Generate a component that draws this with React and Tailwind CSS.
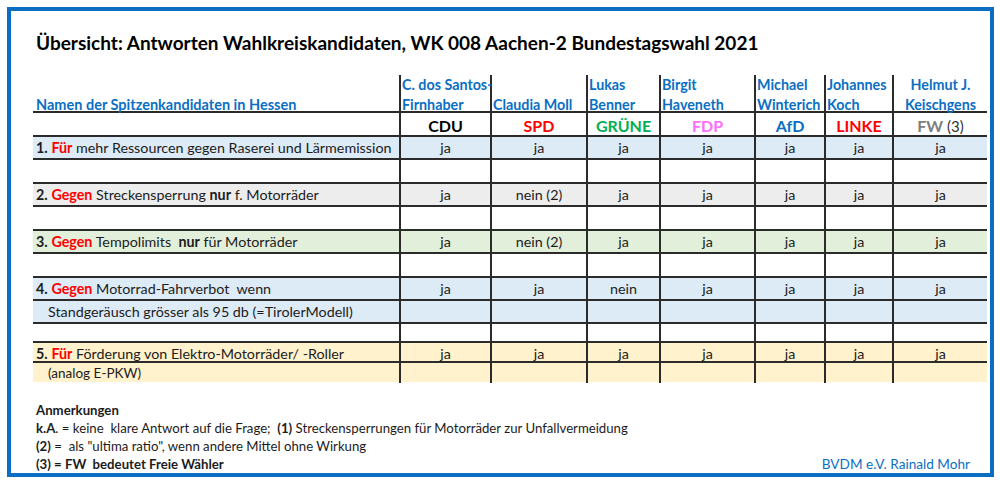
const FONT = { fontFamily: 'Lato, "Open Sans", sans-serif' };

const RED = 'text-[#ff0000]';
const COLS = 'grid grid-cols-[366px_91px_96px_73px_95px_70px_68px_95px]';

const candidates = [
  { a: 'C. dos Santos-', b: 'Firnhaber' },
  { a: '', b: 'Claudia Moll' },
  { a: 'Lukas', b: 'Benner' },
  { a: 'Birgit', b: 'Haveneth' },
  { a: 'Michael', b: 'Winterich' },
  { a: 'Johannes', b: 'Koch' },
  { a: 'Helmut J.', b: 'Keischgens', center: true },
];

const questions = [
  {
    bg: 'bg-[#ddebf7]',
    label: <><b>1.</b> <b className={RED}>Für</b> mehr Ressourcen gegen Raserei und Lärmemission</>,
    answers: ['ja', 'ja', 'ja', 'ja', 'ja', 'ja', 'ja'],
  },
  {
    bg: 'bg-[#ededed]',
    label: <><b>2.</b> <b className={RED}>Gegen</b> Streckensperrung <b>nur</b> f. Motorräder</>,
    answers: ['ja', 'nein (2)', 'ja', 'ja', 'ja', 'ja', 'ja'],
  },
  {
    bg: 'bg-[#e2efda]',
    label: <><b>3.</b> <b className={RED}>Gegen</b> Tempolimits  <b>nur</b> für Motorräder</>,
    answers: ['ja', 'nein (2)', 'ja', 'ja', 'ja', 'ja', 'ja'],
  },
  {
    bg: 'bg-[#ddebf7]',
    label: <><b>4.</b> <b className={RED}>Gegen</b> Motorrad-Fahrverbot  wenn</>,
    answers: ['ja', 'ja', 'nein', 'ja', 'ja', 'ja', 'ja'],
    extra: 'Standgeräusch grösser als 95 db (=TirolerModell)',
    spacer: 'h-[19px]',
  },
  {
    bg: 'bg-[#fff2cc]',
    label: <><b>5.</b> <b className={RED}>Für</b> Förderung von Elektro-Motorräder/ -Roller</>,
    answers: ['ja', 'ja', 'ja', 'ja', 'ja', 'ja', 'ja'],
    extra: '(analog E-PKW)',
    small: true,
    last: true,
  },
];

function Row({ height, bg = '', border = true, label, cells = [], cellClass = '', labelClass = '' }) {
  return (
    <div className={`${COLS} ${height} ${bg} ${border ? 'border-b-2 border-[#2b2b2b]' : ''}`}>
      <div className={`flex items-center pl-[3px] ${labelClass}`}>
        <span className="whitespace-pre">{label}</span>
      </div>
      {Array.from({ length: 7 }).map((_, i) => (
        <div key={i} className={`flex items-center justify-center border-l-2 border-[#2b2b2b] ${cellClass}`}>
          {cells[i]}
        </div>
      ))}
    </div>
  );
}

export default function App() {
  return (
    <div className="w-[1000px] h-[482px] bg-white pt-[7px] pl-[7px] text-[#1c1c1c]" style={FONT}>
      <div className="w-[987px] h-[470px] border-4 border-[#0a6fc3] pl-[22px] pr-[3px]">
        <h1 className="mt-[19px] text-[19px] leading-[26px] font-bold text-black pl-[3px]">
          Übersicht: Antworten Wahlkreiskandidaten, WK 008 Aachen-2 Bundestagswahl 2021
        </h1>

        <div className="mt-[19px] w-[954px] text-[14.3px]">
          {/* candidate names */}
          <div className={`${COLS} h-[38px] border-b-2 border-[#2b2b2b] font-bold text-[#0a6fc3] leading-[20px]`}>
            <div className="flex items-end pl-[3px] pb-[5px] text-[14.5px]">Namen der Spitzenkandidaten in Hessen</div>
            {candidates.map((c, i) => (
              <div
                key={i}
                className={`flex flex-col justify-end border-l-2 border-[#2b2b2b] pb-[5px] whitespace-nowrap ${c.center ? 'items-center' : 'pl-[1px]'}`}
              >
                <div className="h-[20px] relative z-10">{c.a}</div>
                <div>{c.b}</div>
              </div>
            ))}
          </div>

          {/* parties */}
          <Row
            height="h-[24px]"
            cellClass="font-bold text-[16px] pt-[1px]"
            cells={[
              <span className="text-black">CDU</span>,
              <span className="text-[#ff0000]">SPD</span>,
              <span className="text-[#00b050]">GRÜNE</span>,
              <span className="text-[#ff6dff]">FDP</span>,
              <span className="text-[#0a6fc3]">AfD</span>,
              <span className="text-[#ff0000]">LINKE</span>,
              <span>
                <span className="text-[#7f7f7f]">FW</span>
                <span className="font-normal text-[15px] text-[#333]"> (3)</span>
              </span>,
            ]}
          />

          {questions.map((q, i) => (
            <div key={i}>
              <Row height={q.last ? 'h-[20px]' : 'h-[23px]'} bg={q.bg} label={q.label} cells={q.answers} />
              {q.extra && (
                <Row
                  height={q.last ? 'h-[19px]' : 'h-[23px]'}
                  bg={q.bg}
                  border={!q.last}
                  label={q.extra}
                  labelClass={`pl-[15px] ${q.small ? 'text-[13.5px]' : ''}`}
                />
              )}
              {!q.last && <Row height={q.spacer || 'h-[24px]'} />}
            </div>
          ))}
        </div>

        {/* notes */}
        <div className="mt-[19px] text-[13.2px] leading-[18px] pl-[3px]">
          <div className="font-bold">Anmerkungen</div>
          <div className="whitespace-pre">
            <b>k.A</b>. = keine  klare Antwort auf die Frage;  <b>(1)</b> Streckensperrungen für Motorräder zur Unfallvermeidung
          </div>
          <div className="whitespace-pre">
            <b>(2)</b> =  als "ultima ratio", wenn andere Mittel ohne Wirkung
          </div>
          <div className="flex justify-between pr-[17px]">
            <span className="font-bold whitespace-pre">(3) = FW  bedeutet Freie Wähler</span>
            <span className="text-[#0a6fc3] text-[13.6px]">BVDM e.V. Rainald Mohr</span>
          </div>
        </div>
      </div>
    </div>
  );
}
